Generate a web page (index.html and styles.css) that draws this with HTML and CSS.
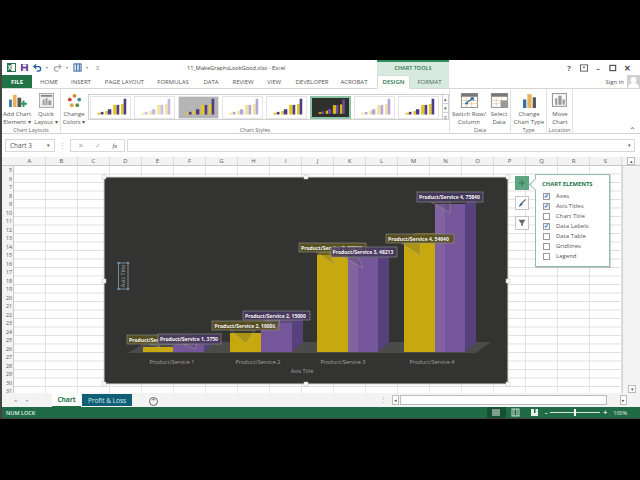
FILE: index.html
```html
<!DOCTYPE html>
<html lang="en">
<head>
<meta charset="utf-8">
<title>Excel</title>
<link rel="stylesheet" href="styles.css">
</head>
<body>
<svg class="defs" width="0" height="0">
  <symbol id="bars" viewBox="0 0 40 24">
    <rect class="b-g" x="5" y="18" width="4" height="2"/><rect class="b-p" x="9" y="17" width="3" height="3"/>
    <rect class="b-g" x="14" y="16" width="3" height="4"/><rect class="b-p" x="17" y="14" width="4" height="6"/>
    <rect class="b-g" x="23" y="9" width="4" height="11"/><rect class="b-p" x="27" y="9" width="3" height="11"/>
    <rect class="b-g" x="32" y="8" width="3" height="12"/><rect class="b-p" x="35" y="2" width="3" height="18"/>
  </symbol>
</svg>
<div class="window">
  <header class="titlebar">
    <div class="qat">
      <svg class="q" viewBox="0 0 10 10"><rect width="10" height="10" fill="#1d7044"/><rect x="5" y="1" width="4" height="8" fill="#fff"/><text x="0.6" y="7.6" class="xl">X</text></svg>
      <svg class="q" viewBox="0 0 10 10"><path d="M1 1h7l1 1v7H1z" fill="#6b3f99"/><rect x="3" y="1.5" width="4" height="2.5" fill="#fff"/><rect x="3" y="6" width="4" height="3" fill="#e8e0f0"/></svg>
      <svg class="q" viewBox="0 0 10 10"><path d="M1 4h5a2.500 2.500 0 0 1 0 5H4M3.500 1.500 1 4l2.500 2.500" fill="none" stroke="#1f5a98" stroke-width="1.400"/></svg>
      <span class="caret">▾</span>
      <svg class="q faint" viewBox="0 0 10 10"><path d="M9 4H4a2.500 2.500 0 0 0 0 5h2M6.500 1.500 9 4 6.500 6.500" fill="none" stroke="#a9a9a9" stroke-width="1.300"/></svg>
      <span class="caret">▾</span>
      <svg class="q" viewBox="0 0 10 10"><rect x="1" y="1" width="8" height="8" fill="#dfe7f1" stroke="#2f5f98"/><path d="M4 1v8M7 1v8" stroke="#2f5f98"/></svg>
      <span class="caret">▾</span>
      <span class="caret custom">≡</span>
    </div>
    <div class="doc-title">11_MakeGraphsLookGood.xlsx - Excel</div>
    <div class="tools-head">CHART TOOLS</div>
    <div class="winbtns">
      <span>?</span>
      <svg class="wb" viewBox="0 0 9 8"><rect x=".5" y=".5" width="8" height="7" fill="none" stroke="#555"/><path d="M3 4l1.500-2L6 4z" fill="#555"/></svg>
      <span>–</span>
      <svg class="wb" viewBox="0 0 9 8"><rect x="1" y="1" width="6.500" height="6" fill="none" stroke="#444" stroke-width="1.200"/></svg>
      <span>✕</span>
    </div>
  </header>
  <nav class="tabs">
    <a class="tab file">FILE</a>
    <a class="tab t-home">HOME</a>
    <a class="tab t-insert">INSERT</a>
    <a class="tab t-layout">PAGE LAYOUT</a>
    <a class="tab t-form">FORMULAS</a>
    <a class="tab t-data">DATA</a>
    <a class="tab t-review">REVIEW</a>
    <a class="tab t-view">VIEW</a>
    <a class="tab t-dev">DEVELOPER</a>
    <a class="tab t-acro">ACROBAT</a>
    <a class="tab ctx active">DESIGN</a>
    <a class="tab ctx fmt">FORMAT</a>
    <div class="signin">Sign in
      <svg class="avatar" viewBox="0 0 13 13"><rect width="13" height="13" fill="#cfcfcf"/><circle cx="6.500" cy="5" r="3" fill="#fff"/><path d="M1 13c0-4 3-5 5.500-5s5.500 1 5.500 5z" fill="#fff"/></svg>
    </div>
  </nav>
  <section class="ribbon">
    <div class="group g-layouts">
      <div class="cmds">
        <div class="cmd w-add">
          <svg class="ico" viewBox="0 0 20 16"><rect x="1" y="7" width="3" height="8" fill="#3f78b5"/><rect x="5" y="2" width="4" height="13" fill="#e6b35c"/><rect x="10" y="5" width="4" height="10" fill="#555"/><path d="M16.500 8v7M13 11.500h7" stroke="#2f9460" stroke-width="2"/></svg>
          <span>Add Chart<br>Element ▾</span>
        </div>
        <div class="cmd w-quick">
          <svg class="ico boxed" viewBox="0 0 16 16"><rect x=".5" y=".5" width="15" height="15" fill="#eee" stroke="#aaa"/><rect x="2" y="2" width="12" height="2" fill="#888"/><rect x="4" y="7" width="2" height="6" fill="#999"/><rect x="7" y="5.500" width="2" height="7.500" fill="#999"/><rect x="10" y="8" width="3" height="5" fill="#999"/></svg>
          <span>Quick<br>Layout ▾</span>
        </div>
      </div>
      <div class="glabel">Chart Layouts</div>
    </div>
    <div class="group g-styles">
      <div class="cmds">
        <div class="cmd w-colors">
          <svg class="ico" viewBox="0 0 16 16"><circle cx="8" cy="3" r="2" fill="#d9822b"/><circle cx="3" cy="7" r="2" fill="#c9412f"/><circle cx="13" cy="7" r="2" fill="#3a8c8c"/><circle cx="5" cy="13" r="2" fill="#e3a52a"/><circle cx="11" cy="13" r="2" fill="#5a8f4a"/></svg>
          <span>Change<br>Colors ▾</span>
        </div>
        <div class="gallery">
          <svg class="thumb t-std"><use href="#bars"/></svg>
          <svg class="thumb t-pale"><use href="#bars"/></svg>
          <svg class="thumb t-grey"><use href="#bars"/></svg>
          <svg class="thumb t-pale2"><use href="#bars"/></svg>
          <svg class="thumb t-std"><use href="#bars"/></svg>
          <svg class="thumb t-dark"><use href="#bars"/></svg>
          <svg class="thumb t-pale2"><use href="#bars"/></svg>
          <svg class="thumb t-std"><use href="#bars"/></svg>
          <div class="gscroll"><i>▴</i><i>▾</i><i>≡</i></div>
        </div>
      </div>
      <div class="glabel">Chart Styles</div>
    </div>
    <div class="group g-data">
      <div class="cmds">
        <div class="cmd w-switch">
          <svg class="ico" viewBox="0 0 16 14"><rect x=".5" y=".5" width="15" height="13" fill="#fff" stroke="#999"/><rect x=".5" y=".5" width="15" height="3" fill="#777"/><path d="M.5 7h15M.5 10h15M5 3v10M10 3v10" stroke="#e6b35c" stroke-width=".5"/><path d="M4 10l7-5M9 4.500h2.500V7M4 10h2.500" fill="none" stroke="#2b6cb5" stroke-width="1.200"/></svg>
          <span>Switch Row/<br>Column</span>
        </div>
        <div class="cmd w-select">
          <svg class="ico" viewBox="0 0 16 14"><rect x=".5" y=".5" width="15" height="13" fill="#fff" stroke="#999"/><rect x=".5" y=".5" width="15" height="3" fill="#777"/><path d="M.5 7h15M.5 10h15M5 3v10M10 3v10" stroke="#d9b98a" stroke-width=".5"/><rect x="9" y="7" width="7" height="7" fill="#999"/></svg>
          <span>Select<br>Data</span>
        </div>
      </div>
      <div class="glabel">Data</div>
    </div>
    <div class="group g-type">
      <div class="cmds">
        <div class="cmd w-type">
          <svg class="ico" viewBox="0 0 16 14"><rect x="2" y="6" width="3" height="8" fill="#2f6cae"/><rect x="6" y="1" width="4" height="13" fill="#e6b35c"/><rect x="11" y="4" width="3" height="10" fill="#555"/></svg>
          <span>Change<br>Chart Type</span>
        </div>
      </div>
      <div class="glabel">Type</div>
    </div>
    <div class="group g-loc">
      <div class="cmds">
        <div class="cmd w-move">
          <svg class="ico" viewBox="0 0 16 14"><rect x=".5" y=".5" width="13" height="12" fill="#fafafa" stroke="#999"/><rect x="3" y="5" width="2" height="6" fill="#999"/><rect x="6" y="2.500" width="3" height="8.500" fill="#999"/><rect x="10" y="6" width="2" height="5" fill="#999"/></svg>
          <span>Move<br>Chart</span>
        </div>
      </div>
      <div class="glabel">Location</div>
    </div>
    <div class="collapse">⌃</div>
  </section>
  <section class="formula">
    <div class="namebox">Chart 3<span>▾</span></div>
    <div class="fdots">⋮</div>
    <div class="fbtns"><span class="off">✕</span><span class="off">✓</span><span class="fx">fx</span></div>
    <div class="finput"><span>▾</span></div>
  </section>
  <section class="sheet">
    <div class="colhead">
      <div class="corner"></div>
      <span>A</span><span>B</span><span>C</span><span>D</span><span>E</span><span>F</span><span>G</span><span>H</span><span>I</span><span>J</span><span>K</span><span>L</span><span>M</span><span>N</span><span>O</span><span>P</span><span>Q</span><span>R</span><span>S</span>
      <div class="vup">▴</div>
    </div>
    <div class="gridwrap">
      <div class="rowhead">
        <span>5</span><span>6</span><span>7</span><span>8</span><span>9</span><span>10</span><span>11</span><span>12</span><span>13</span><span>14</span><span>15</span><span>16</span><span>17</span><span>18</span><span>19</span><span>20</span><span>21</span><span>22</span><span>23</span><span>24</span><span>25</span><span>26</span><span>27</span><span>28</span><span>29</span><span>30</span><span>31</span>
      </div>
      <div class="grid"></div>
      <div class="vscroll"><i class="vdown">▾</i></div>
    </div>

    <svg class="chart" viewBox="100 173 412 215">
      <rect x="104" y="177" width="404" height="207" fill="#333331" stroke="#d8d8d8" stroke-width="1"/>
      <polygon points="128,353 146,342 491,342 476,353" fill="#4b4b49"/>

      <g class="bar-3d">
        <polygon class="side-p" points="204,345 215,336 215,342 204,352"/>
        <polygon class="top-p" points="173,345 184,336 215,336 204,345"/>
        <rect class="front-g" x="143" y="347" width="30" height="5"/>
        <rect class="front-p" x="173" y="345" width="31" height="7"/>

        <polygon class="side-p" points="292,323 303,313 303,342 292,352"/>
        <polygon class="top-p" points="261,323 272,313 303,313 292,323"/>
        <rect class="front-g" x="230" y="333" width="31" height="19"/>
        <rect class="front-p" x="261" y="323" width="31" height="29"/>

        <polygon class="side-p" points="378,258 389,248 389,342 378,352"/>
        <polygon class="top-p" points="348,258 359,248 389,248 378,258"/>
        <polygon class="top-g" points="317,255 328,245 359,245 348,255"/>
        <rect class="front-g" x="317" y="255" width="31" height="97"/>
        <rect class="front-p" x="348" y="258" width="30" height="94"/>
        <rect class="sheen" x="348" y="258" width="10" height="94"/>

        <polygon class="side-p" points="465,204 476,194 476,342 465,352"/>
        <polygon class="top-g" points="404,243 415,233 446,233 435,243"/>
        <rect class="front-g" x="404" y="243" width="31" height="109"/>
        <rect class="front-p" x="435" y="204" width="30" height="148"/>
        <rect class="sheen" x="435" y="204" width="10" height="148"/>
      </g>

      <g class="axis">
        <text x="172" y="364">Product/Service 1</text>
        <text x="258" y="364">Product/Service 2</text>
        <text x="343" y="364">Product/Service 3</text>
        <text x="432" y="364">Product/Service 4</text>
        <text x="302" y="373">Axis Title</text>
        <text transform="translate(125 276) rotate(-90)">Axis Title</text>
      </g>
      <rect x="118.500" y="263" width="9.500" height="26" fill="none" stroke="#8fb0cc" stroke-width=".7"/>
      <g fill="#6c97bd"><circle cx="118.500" cy="263" r="1.200"/><circle cx="128" cy="263" r="1.200"/><circle cx="118.500" cy="289" r="1.200"/><circle cx="128" cy="289" r="1.200"/></g>

      <g class="callout gold">
        <path class="tail" d="M150 344l10 3-2-3z"/><rect x="127" y="335" width="63" height="9"/><text x="129" y="341.800">Product/Service 1, 2500</text>
      </g>
      <g class="callout plum">
        <path class="tail" d="M183 344l12 5 2-5z"/><rect x="158" y="334" width="63" height="10"/><text x="160" y="341.300">Product/Service 1, 3750</text>
      </g>
      <g class="callout gold">
        <path class="tail" d="M230 330l16 13 9-13z"/><rect x="212" y="321" width="67" height="9"/><text x="214.500" y="327.800">Product/Service 2, 10000</text>
      </g>
      <g class="callout plum">
        <path class="tail" d="M267 320l10 9 3-9z"/><rect x="243" y="311" width="67" height="9"/><text x="245" y="317.800">Product/Service 2, 15000</text>
      </g>
      <g class="callout gold">
        <path class="tail" d="M316 252l18 12-5-12z"/><rect x="299" y="243" width="67" height="9"/><text x="301" y="249.800">Product/Service 3, 50210</text>
      </g>
      <g class="callout plum">
        <path class="tail" d="M343 257l20 11-5-11z"/><rect x="331" y="247" width="66" height="10"/><text x="332.500" y="254.300">Product/Service 3, 48213</text>
      </g>
      <g class="callout gold">
        <path class="tail" d="M401 243l19 12v-12z"/><rect x="386" y="234" width="68" height="9"/><text x="388" y="240.800">Product/Service 4, 54640</text>
      </g>
      <g class="callout plum">
        <path class="tail" d="M431 202l19 11v-11z"/><rect x="417" y="192" width="66" height="10"/><text x="419" y="199.300">Product/Service 4, 75840</text>
      </g>

      <g class="handles">
        <rect x="102" y="175" width="4" height="4"/><rect x="304" y="175" width="4" height="4"/><rect x="506" y="175" width="4" height="4"/>
        <rect x="102" y="279" width="4" height="4"/><rect x="506" y="279" width="4" height="4"/>
        <rect x="102" y="382" width="4" height="4"/><rect x="304" y="382" width="4" height="4"/><rect x="506" y="382" width="4" height="4"/>
      </g>
    </svg>

    <div class="sidebtns">
      <button class="sbtn plus"><svg viewBox="0 0 10 10"><path d="M5 1v8M1 5h8" stroke="#3f8764" stroke-width="2"/></svg></button>
      <button class="sbtn"><svg viewBox="0 0 10 10"><path d="M9.500 .5 5 5" stroke="#444" stroke-width="1.300"/><path d="M4.500 4 6 5.500C5.500 8 3 9.500 .5 9.500 2 8.500 2.500 5 4.500 4z" fill="#2b6cb5"/></svg></button>
      <button class="sbtn"><svg viewBox="0 0 10 10"><path d="M.5 1h9L6 5.500V9L4 8V5.500z" fill="#666"/></svg></button>
    </div>
    <div class="elements">
      <h2>CHART ELEMENTS</h2>
      <ul>
        <li><i class="cb on">✓</i>Axes</li>
        <li><i class="cb on">✓</i>Axis Titles</li>
        <li><i class="cb"></i>Chart Title</li>
        <li><i class="cb on">✓</i>Data Labels</li>
        <li><i class="cb"></i>Data Table</li>
        <li><i class="cb"></i>Gridlines</li>
        <li><i class="cb"></i>Legend</li>
      </ul>
    </div>
  </section>
  <section class="sheettabs">
    <div class="navs"><span>◂</span><span>▸</span></div>
    <div class="stab current">Chart</div>
    <div class="stab teal">Profit &amp; Loss</div>
    <div class="addsheet">+</div>
    <div class="splitter">⋮</div>
    <div class="hscroll"><i>◂</i><b></b><i>▸</i></div>
  </section>
  <footer class="status">
    <span class="numlock">NUM LOCK</span>
    <div class="views">
      <div class="view on"><svg viewBox="0 0 9 9"><path d="M1 1v7M3 1v7M5 1v7M7 1v7" stroke="#e6efe9" stroke-width="1"/></svg></div>
      <div class="view"><svg viewBox="0 0 9 9"><rect x="1" y="1" width="7" height="7" fill="none" stroke="#cfdcd4"/><path d="M3 1v7M6 1v7" stroke="#cfdcd4"/></svg></div>
      <div class="view"><svg viewBox="0 0 9 9"><rect x="1" y="1" width="7" height="7" fill="#e6efe9"/><rect x="4" y="1" width="1.500" height="4" fill="#1f6b45"/></svg></div>
    </div>
    <div class="zoom"><span>-</span><div class="slider"><i></i></div><span>+</span></div>
    <span class="pct">100%</span>
  </footer>
</div>
</body>
</html>
```
FILE: styles.css
```css
* { box-sizing: border-box; }
html, body { margin: 0; height: 100%; background: #000; overflow: hidden; }
body { padding-top: 60px; font-family: "Open Sans", "Liberation Sans", sans-serif; color: #555; }
.defs { position: absolute; }
.window { height: 359px; margin-left: 2px; background: #fff; display: flex; flex-direction: column; border-bottom: 1px solid #444; box-shadow: -2px 0 0 #444; }

/* title bar */
.titlebar { height: 15px; display: flex; align-items: center; flex: none; position: relative; font-size: 6px; }
.qat { width: 185px; padding-left: 5px; display: flex; align-items: center; gap: 4px; }
.q { width: 9px; height: 9px; flex: none; }
.xl { font: bold 7px "Liberation Sans", sans-serif; fill: #fff; }
.caret { font-size: 4px; color: #888; width: 3px; }
.custom { margin-left: 3px; font-size: 6px; }
.doc-title { width: 190px; color: #444; font-size: 5.600px; white-space: nowrap; }
.tools-head { width: 72px; height: 15px; background: #d8eadf; border-top: 2px solid #2d8f5a; color: #217346; font-size: 5.500px; font-weight: 600; text-align: center; line-height: 12px; }
.winbtns { margin-left: 116px; display: flex; align-items: center; gap: 6.500px; font-size: 7.500px; font-weight: 600; color: #444; }
.winbtns span { width: 8px; text-align: center; }
.wb { width: 8px; height: 8px; }

/* tabs */
.tabs { height: 14px; display: flex; flex: none; align-items: stretch; font-size: 6px; color: #555; border-bottom: 1px solid #d6d6d6; position: relative; }
.tab { display: flex; align-items: center; justify-content: center; white-space: nowrap; flex: none; }
.file { width: 30px; background: #217346; color: #fff; font-weight: 700; margin-right: 6px; }
.t-home { width: 22px; margin-right: 10.500px; }
.t-insert { width: 21px; margin-right: 13.500px; }
.t-layout { width: 39px; margin-right: 13.500px; }
.t-form { width: 31px; margin-right: 14.500px; }
.t-data { width: 16px; margin-right: 13.500px; }
.t-review { width: 21px; margin-right: 13px; }
.t-view { width: 15px; margin-right: 14px; }
.t-dev { width: 33px; margin-right: 12px; }
.t-acro { width: 27px; margin-right: 9.500px; }
.ctx { width: 33px; color: #217346; }
.active { background: #fff; font-weight: 600; border: 1px solid #cfe0d6; border-bottom: 1px solid #fff; height: 14px; }
.fmt { width: 39px; background: #d8eadf; color: #4a6a58; }
.signin { margin-left: auto; display: flex; align-items: center; gap: 3px; color: #555; }
.avatar { width: 13px; height: 13px; }

/* ribbon */
.ribbon { height: 45px; flex: none; display: flex; position: relative; border-bottom: 1px solid #d4d4d4; }
.group { display: flex; flex-direction: column; border-right: 1px solid #e2e2e2; flex: none; }
.cmds { flex: 1; display: flex; align-items: flex-start; }
.glabel { height: 10px; line-height: 8px; text-align: center; font-size: 5.500px; color: #666; }
.cmd { display: flex; flex-direction: column; align-items: center; font-size: 6px; line-height: 8px; text-align: center; color: #555; padding-top: 4px; flex: none; white-space: nowrap; }
.ico { width: 19px; height: 15px; margin-bottom: 2px; flex: none; }
.g-layouts { width: 59px; }
.w-add { width: 30px; }
.w-quick { width: 28px; }
.g-styles { width: 389px; }
.w-colors { width: 26px; }
.gallery { margin-top: 5px; margin-left: 1px; width: 361px; height: 26px; display: flex; align-items: center; gap: 3px; border: 1px solid #d0d0d0; padding-left: 1px; }
.thumb { width: 41px; height: 23px; flex: none; background: #fff; border: 1px solid #e4e4e4; --g: #e3c51d; --p: #4f3b87; }
.thumb use { width: 100%; height: 100%; }
.b-g { fill: var(--g); }
.b-p { fill: var(--p); }
.t-pale { --g: #f3e6a0; --p: #c9b8e0; }
.t-pale2 { --g: #f0e39a; --p: #b9a6d8; }
.t-grey { background: #b5b5b5; --g: #e9c91c; --p: #4f3b87; }
.t-dark { background: #2f2f2d; border: 2px solid #8cc4a6; --g: #d9b91a; --p: #6f50a0; }
.gscroll { width: 9px; margin-left: auto; align-self: stretch; display: flex; flex-direction: column; border-left: 1px solid #d0d0d0; }
.gscroll i { flex: 1; font-style: normal; font-size: 5px; line-height: 8px; text-align: center; color: #555; border-bottom: 1px solid #d0d0d0; }
.gscroll i:last-child { border: 0; }
.g-data { width: 61px; }
.w-switch { width: 38px; }
.w-select { width: 22px; }
.g-type { width: 36px; }
.w-type { width: 36px; }
.g-loc { width: 26px; }
.w-move { width: 26px; }
.collapse { position: absolute; right: 4px; bottom: 0; font-size: 8px; line-height: 7px; color: #555; }

/* formula bar */
.formula { height: 23px; flex: none; display: flex; align-items: flex-start; padding-top: 5px; font-size: 6.500px; background: #fff; }
.namebox { margin-left: 3px; width: 50px; height: 13px; border: 1px solid #d8d8d8; padding: 0 4px; line-height: 11px; display: flex; justify-content: space-between; color: #555; }
.namebox span { font-size: 5px; }
.fdots { width: 15px; text-align: center; line-height: 13px; color: #aaa; }
.fbtns { width: 55px; height: 13px; border: 1px solid #d8d8d8; display: flex; align-items: center; justify-content: space-around; padding: 0 1px; }
.off { color: #b5b5b5; }
.fx { font-family: "Liberation Serif", serif; font-style: italic; color: #444; }
.finput { margin-left: 2px; width: 508px; height: 13px; border: 1px solid #d8d8d8; text-align: right; padding-right: 3px; line-height: 11px; font-size: 5px; }

/* sheet */
.sheet { height: 236px; flex: none; position: relative; display: flex; flex-direction: column; overflow: hidden; }
.colhead { height: 9px; flex: none; display: flex; font-size: 6px; line-height: 9px; color: #555; background: #f3f3f3; border-bottom: 1px solid #c9c9c9; }
.corner { width: 12px; flex: none; }
.colhead span { width: 32px; flex: none; text-align: center; border-right: 1px solid #d9d9d9; }
.vup { margin-left: 5px; width: 8px; height: 8px; font-size: 5px; line-height: 7px; text-align: center; border: 1px solid #bbb; background: #fff; }
.gridwrap { flex: 1; display: flex; min-height: 0; }
.rowhead { width: 12px; flex: none; background: #f3f3f3; border-right: 1px solid #c9c9c9; display: flex; flex-direction: column; overflow: hidden; }
.rowhead span { height: 8.500px; flex: none; font-size: 5.300px; line-height: 8.500px; text-align: right; padding-right: 1px; color: #555; }
.grid { width: 608px; flex: none; background-color: #fff;
  background-image: linear-gradient(#dfdfdf 1px, transparent 1px), linear-gradient(90deg, #e3e3e3 1px, transparent 1px);
  background-size: 32px 8.500px; background-position: 0 -1px, -1px 0; }
.vscroll { flex: 1; position: relative; background: #f4f4f4; border-left: 1px solid #cfcfcf; }
.vdown { position: absolute; bottom: 0; left: 5px; width: 8px; height: 8px; font-style: normal; font-size: 5px; line-height: 7px; text-align: center; border: 1px solid #bbb; background: #fff; }

.chart { position: absolute; left: 98px; top: 16px; width: 412px; height: 215px; }
.front-g { fill: #c8a80f; }
.front-p { fill: #75569b; }
.side-p { fill: #57417c; }
.top-p { fill: #5d4a7c; }
.top-g { fill: #6e6118; }
.sheen { fill: #a98cb3; opacity: .25; }
.axis text { font-family: "Open Sans", sans-serif; font-size: 5.500px; fill: #a3a3a0; text-anchor: middle; }
.callout text { font-family: "Open Sans", sans-serif; font-size: 5px; font-weight: 700; fill: #f4f4f0; }
.callout rect { stroke: #94948c; stroke-width: .6; }
.tail { stroke: #b5b09a; stroke-width: .4; fill-opacity: .25; }
.gold rect, .gold .tail { fill: #5a5420; }
.plum rect, .plum .tail { fill: #483a60; }
.gold rect, .plum rect { fill-opacity: .85; }
.handles rect { fill: #fff; stroke: #bbb; stroke-width: .5; }

.sidebtns { position: absolute; left: 513px; top: 19px; display: flex; flex-direction: column; gap: 6px; }
.sbtn { width: 14px; height: 14px; padding: 2px; background: #fff; border: 1px solid #c4c4c4; display: flex; }
.sbtn svg { width: 100%; height: 100%; }
.plus { background: #5fa582; border-color: #5fa582; }
.elements { position: absolute; left: 533px; top: 17px; width: 75px; height: 93px; background: #fff; border: 1px solid #8fbfa6; padding: 5px 0 0 6px; box-shadow: 1px 1px 1px rgba(0, 0, 0, .15); }
.elements::before { content: ""; position: absolute; left: -5px; top: 5px; width: 8px; height: 8px; background: #fff; border-left: 1px solid #8fbfa6; border-bottom: 1px solid #8fbfa6; transform: rotate(45deg); }
.elements h2 { margin: 0 0 3px; font-size: 5.800px; line-height: 8px; font-weight: 700; color: #217346; }
.elements ul { margin: 0; padding: 0 0 0 1px; list-style: none; }
.elements li { height: 10px; display: flex; align-items: center; gap: 6px; font-size: 6px; color: #555; }
.cb { width: 7px; height: 7px; border: 1px solid #9a9a9a; font-style: normal; font-size: 6px; line-height: 5px; text-align: center; color: #2b6cb5; font-weight: 700; flex: none; }
.on { background: #e8f1fa; }

/* sheet tabs */
.sheettabs { height: 14px; flex: none; display: flex; align-items: stretch; background: #f3f3f3; font-size: 6.500px; }
.navs { width: 50px; display: flex; gap: 9px; padding-left: 12px; align-items: center; color: #aaa; font-size: 5px; }
.stab { display: flex; align-items: center; justify-content: center; }
.current { width: 29px; background: #fff; color: #217346; font-weight: 700; border-bottom: 1px solid #217346; }
.teal { width: 50px; margin: 1px 0 1px 1px; background: #0f5f75; color: #d6ecf2; }
.addsheet { width: 7px; height: 7px; margin: 3.500px 0 0 17px; border: 1px solid #666; border-radius: 50%; line-height: 5px; text-align: center; font-size: 6px; color: #444; box-sizing: content-box; }
.splitter { width: 7px; margin-left: 222px; line-height: 14px; color: #aaa; text-align: center; }
.hscroll { margin: 2px 0 2px 5px; width: 236px; display: flex; gap: 1px; }
.hscroll i { width: 7px; font-style: normal; font-size: 5px; line-height: 8px; text-align: center; border: 1px solid #bbb; background: #fff; flex: none; }
.hscroll b { width: 207px; background: #fff; border: 1px solid #bbb; margin-right: 12px; flex: none; }

/* status */
.status { height: 11px; flex: none; display: flex; align-items: center; background: #1f6b45; color: #e6efe9; font-size: 5.500px; padding-left: 4px; }
.numlock { width: 481px; font-weight: 600; flex: none; }
.views { display: flex; height: 11px; }
.view { width: 19px; display: flex; align-items: center; justify-content: center; }
.view svg { width: 9px; height: 9px; }
.on.view { background: #174f33; }
.zoom { margin-left: 1px; display: flex; align-items: center; gap: 3px; font-weight: 700; font-size: 7px; }
.slider { width: 50px; height: 1px; background: #d7e4dc; position: relative; }
.slider i { position: absolute; left: 24px; top: -3px; width: 2px; height: 7px; background: #fff; }
.pct { margin-left: 6px; }
```
